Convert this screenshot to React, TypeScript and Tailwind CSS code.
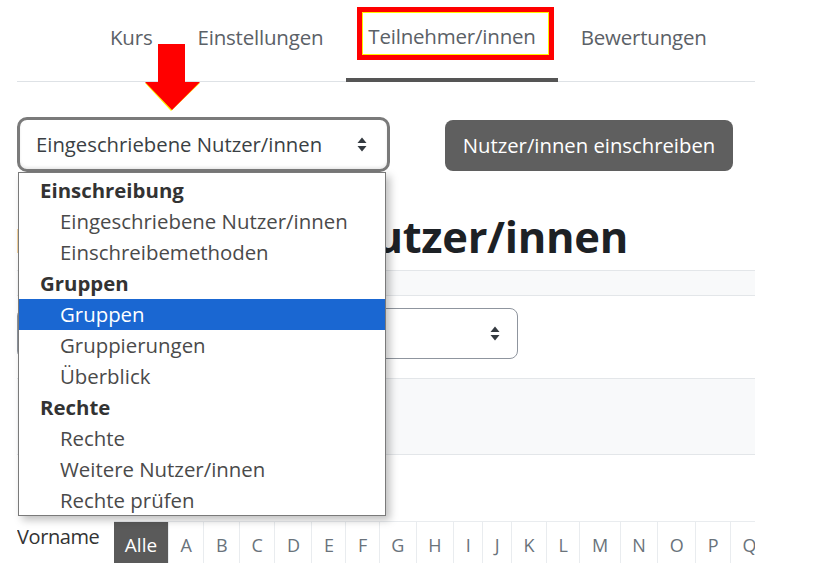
import React from "react";

const tabs = ["Kurs", "Einstellungen", "Teilnehmer/innen", "Bewertungen"];

const options: { label: string; group?: boolean; selected?: boolean }[] = [
    { label: "Einschreibung", group: true },
    { label: "Eingeschriebene Nutzer/innen" },
    { label: "Einschreibemethoden" },
    { label: "Gruppen", group: true },
    { label: "Gruppen", selected: true },
    { label: "Gruppierungen" },
    { label: "Überblick" },
    { label: "Rechte", group: true },
    { label: "Rechte" },
    { label: "Weitere Nutzer/innen" },
    { label: "Rechte prüfen" },
];

const letters = "ABCDEFGHIJKLMNOPQ".split("");

function SortArrows() {
    return (
        <svg width="10" height="15" viewBox="0 0 10 15" className="shrink-0">
            <path d="M5 0.5 L9.5 6 L0.5 6 Z" fill="#343a40" />
            <path d="M5 14.5 L9.5 9 L0.5 9 Z" fill="#343a40" />
        </svg>
    );
}

export default function App() {
    return (
        <div className="relative w-[830px] h-[563px] overflow-hidden bg-white font-['Open_Sans',sans-serif]">
            <div className="ml-[17px] w-[738px]">
                {/* Reiter */}
                <div className="h-[82px] border-b border-[#dee2e6] flex pl-[70.5px]">
                    {tabs.map((t) => {
                        const active = t === "Teilnehmer/innen";
                        return (
                            <div
                                key={t}
                                className={`relative flex items-center px-[22.5px] pb-[6px] text-[20.5px] tracking-[-0.2px] text-[#5b6167] ${active ? "border-b-4 border-[#555] -mb-px" : ""}`}
                            >
                                {t}
                                {active && (
                                    <div className="absolute left-[11px] right-[4px] top-[7px] h-[53px] border-[5px] border-[#ff0000] outline outline-1 outline-offset-[-6px] outline-[#fff200]" />
                                )}
                            </div>
                        );
                    })}
                </div>

                {/* Auswahl + Button */}
                <div className="flex mt-[35px]">
                    <div className="w-[373px] h-[55px] rounded-[10px] border-[3px] border-[#7a7a7a] flex items-center justify-between pl-[16px] pr-[20px] text-[20.3px] text-[#3a3f44] shadow-[inset_0_-2px_3px_rgba(0,0,0,0.08)]">
                        <span>Eingeschriebene Nutzer/innen</span>
                        <SortArrows />
                    </div>
                    <div className="ml-[55px] mt-[3px] w-[288px] h-[51px] rounded-[8px] bg-[#5f5f5f] text-white text-[20.3px] flex items-center justify-center">
                        Nutzer/innen einschreiben
                    </div>
                </div>

                {/* Hintergrundseite */}
                <div className="mt-[42px] w-[611px] flex justify-end overflow-hidden">
                    <h2 className="shrink-0 text-[43.5px] leading-[46px] font-bold text-[#1d2125] whitespace-nowrap tracking-[-0.3px]">
                        Eingeschriebene Nutzer/innen
                    </h2>
                </div>
                <div className="mt-[10px] h-[26px] bg-[#f8f9fa] border-y border-[#e3e6e9]" />
                <div className="mt-[12px] w-[501px] h-[51px] rounded-[8px] border border-[#8f959e] flex items-center justify-end pr-[17px]">
                    <SortArrows />
                </div>
                <div className="mt-[19px] h-[77px] bg-[#f8f9fa] border-y border-[#e3e6e9]" />

                {/* Buchstabenfilter */}
                <div className="mt-[66px] flex items-start overflow-hidden">
                    <span className="shrink-0 w-[97px] text-[20px] leading-[34px] text-[#333] -mt-[1px] tracking-[-0.4px]">Vorname</span>
                    <div className="flex shrink-0 border-t border-[#e9ecef] h-[44px]">
                        <div className="w-[54px] bg-[#5a5a5a] text-white text-[19px] flex items-center justify-center pt-[4px]">
                            Alle
                        </div>
                        {letters.map((l) => (
                            <div
                                key={l}
                                className="px-[11.5px] border-l border-[#e9ecef] text-[18px] text-[#6a737b] flex items-center pt-[4px]"
                            >
                                {l}
                            </div>
                        ))}
                    </div>
                </div>
            </div>

            {/* Aufgeklappte Liste */}
            <div className="absolute left-[18px] top-[172px] w-[368px] h-[344px] bg-white border border-[#7a7a7a] shadow-[4px_4px_8px_rgba(0,0,0,0.25)] pt-[2px]">
                {options.map((o, i) => (
                    <div
                        key={i}
                        className={`h-[31px] flex items-center text-[20.4px] ${o.group ? "pl-[21px] font-bold text-[#333]" : "pl-[41px]"} ${o.selected ? "bg-[#1a67d2] text-white" : o.group ? "" : "text-[#4a4a4a]"}`}
                    >
                        {o.label}
                    </div>
                ))}
            </div>

            {/* roter Pfeil */}
            <svg className="absolute left-[144px] top-[44px]" width="57" height="68" viewBox="0 0 57 68">
                <path d="M27 67 L1 39 L56 39 Z" fill="#fff200" />
                <path d="M14 0 H41 V38 H56 L28 66 L1 38 H14 Z" fill="#ff0000" />
            </svg>
        </div>
    );
}
